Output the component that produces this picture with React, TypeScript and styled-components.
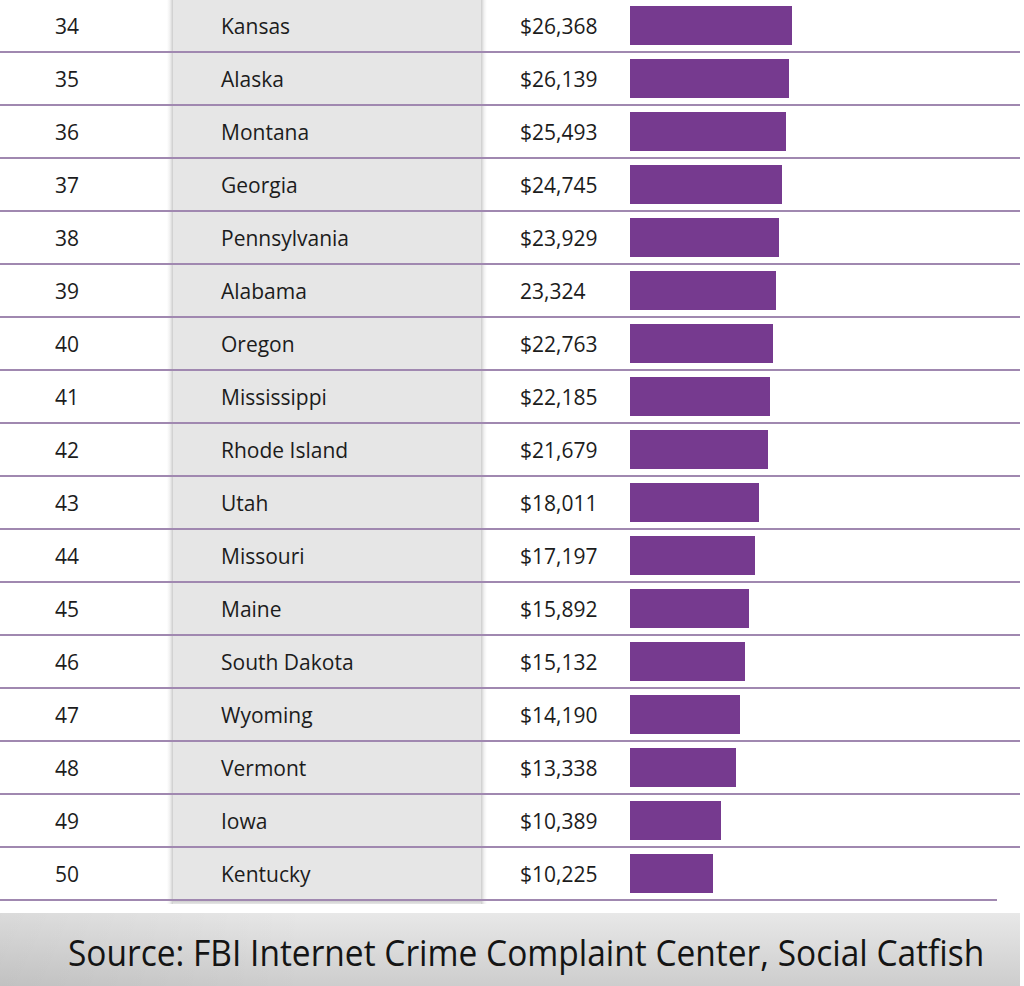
import React from 'react';
import styled, { createGlobalStyle } from 'styled-components';

type Row = { rank: number; state: string; amount: string; bar: number };

const rows: Row[] = [
  { rank: 34, state: 'Kansas', amount: '$26,368', bar: 162 },
  { rank: 35, state: 'Alaska', amount: '$26,139', bar: 159 },
  { rank: 36, state: 'Montana', amount: '$25,493', bar: 156 },
  { rank: 37, state: 'Georgia', amount: '$24,745', bar: 152 },
  { rank: 38, state: 'Pennsylvania', amount: '$23,929', bar: 149 },
  { rank: 39, state: 'Alabama', amount: '23,324', bar: 146 },
  { rank: 40, state: 'Oregon', amount: '$22,763', bar: 143 },
  { rank: 41, state: 'Mississippi', amount: '$22,185', bar: 140 },
  { rank: 42, state: 'Rhode Island', amount: '$21,679', bar: 138 },
  { rank: 43, state: 'Utah', amount: '$18,011', bar: 129 },
  { rank: 44, state: 'Missouri', amount: '$17,197', bar: 125 },
  { rank: 45, state: 'Maine', amount: '$15,892', bar: 119 },
  { rank: 46, state: 'South Dakota', amount: '$15,132', bar: 115 },
  { rank: 47, state: 'Wyoming', amount: '$14,190', bar: 110 },
  { rank: 48, state: 'Vermont', amount: '$13,338', bar: 106 },
  { rank: 49, state: 'Iowa', amount: '$10,389', bar: 91 },
  { rank: 50, state: 'Kentucky', amount: '$10,225', bar: 83 },
];

const App: React.FC = () => {
  return (
    <Page>
      <GlobalStyle />
      <Table>
        {rows.map((row, i) => (
          <TableRow key={row.rank} $last={i === rows.length - 1}>
            <Rank>{row.rank}</Rank>
            <StateCell>{row.state}</StateCell>
            <Amount>{row.amount}</Amount>
            <BarCell>
              <Bar style={{ width: row.bar }} />
            </BarCell>
          </TableRow>
        ))}
      </Table>
      <Footer>
        <SourceText>Source: FBI Internet Crime Complaint Center, Social Catfish</SourceText>
      </Footer>
    </Page>
  );
};

const GlobalStyle = createGlobalStyle`
  html, body {
    margin: 0;
    padding: 0;
    background: #ffffff;
  }
  body {
    font-family: 'Open Sans', 'Noto Sans', sans-serif;
    color: #1c1c1c;
  }
`;

const Page = styled.div`
  width: 1024px;
  height: 986px;
  overflow: hidden;
  display: flex;
  flex-direction: column;
`;

/* the grey state column runs behind every row, with a soft shadow each side */
const Table = styled.div`
  width: 1020px;
  display: flex;
  flex-direction: column;
  padding-bottom: 3px;
  background:
    linear-gradient(to bottom, transparent calc(100% - 3px), rgba(0, 0, 0, 0.1) calc(100% - 3px), transparent 100%)
      173px 0 / 308px 100% no-repeat,
    linear-gradient(
      to right,
      transparent 167px,
      rgba(0, 0, 0, 0.06) 170px,
      rgba(0, 0, 0, 0.2) 173px,
      #e6e6e6 173px,
      #e6e6e6 481px,
      rgba(0, 0, 0, 0.2) 481px,
      rgba(0, 0, 0, 0.06) 484px,
      transparent 487px
    );
`;

const TableRow = styled.div<{ $last: boolean }>`
  display: grid;
  grid-template-columns: 173px 308px 149px 1fr;
  height: 51px;
  border-bottom: 2px solid #a088b0;
  margin-right: ${(p) => (p.$last ? '23px' : '0')};
  font-size: 21px;
`;

const Rank = styled.div`
  display: flex;
  align-items: center;
  padding-left: 55px;
`;

const StateCell = styled.div`
  display: flex;
  align-items: center;
  padding-left: 48px;
`;

const Amount = styled.div`
  display: flex;
  align-items: center;
  padding-left: 39px;
`;

const BarCell = styled.div`
  display: flex;
  align-items: center;
`;

const Bar = styled.div`
  height: 39px;
  background: #763a8f;
`;

const Footer = styled.div`
  margin-top: 9px;
  width: 1020px;
  height: 73px;
  display: flex;
  align-items: center;
  padding-left: 68px;
  box-sizing: border-box;
  background:
    linear-gradient(to right, rgba(0, 0, 0, 0.06), rgba(0, 0, 0, 0) 30%),
    linear-gradient(to bottom, #e8e8e8, #cdcdcd);
`;

const SourceText = styled.span`
  display: inline-block;
  font-size: 37px;
  color: #141414;
  white-space: nowrap;
  transform: scaleX(0.905);
  transform-origin: left center;
  margin-top: 4px;
`;

export default App;
